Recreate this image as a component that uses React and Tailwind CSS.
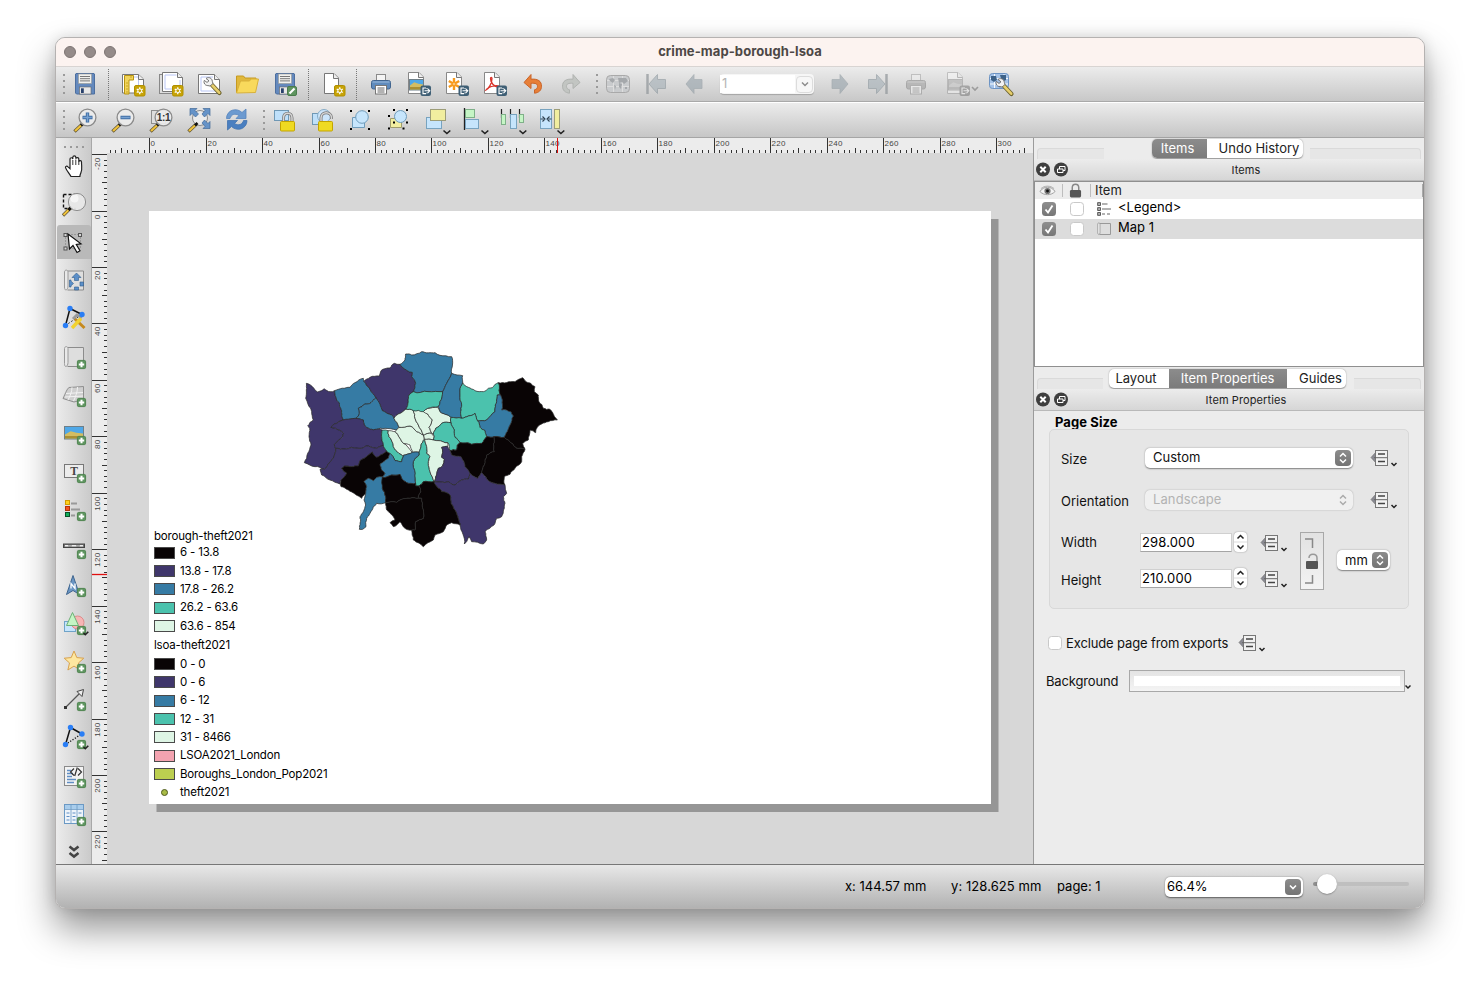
import React from "react";

/* ---------- shared icon parts ---------- */
function Ic({ children, w = "w-[28px]", vb = "0 0 28 28", faded = false }) {
  return (
    <svg viewBox={vb} className={`${w} h-[28px] shrink-0 overflow-visible ${faded ? "opacity-40 grayscale" : ""}`} fill="none">
      {children}
    </svg>
  );
}

const NewBadge = () => (
  <g>
    <rect x="15.5" y="15.5" width="10.5" height="10.5" rx="1.5" fill="#c7a306" stroke="#b08f00" />
    <path d="M20.75 17.2v7.1M17.7 19l6.1 3.5M23.8 19l-6.1 3.5" stroke="#fff" strokeWidth="1.3" />
    <circle cx="20.75" cy="20.75" r="1.9" fill="#c7a306" stroke="#fff" strokeWidth="1" />
  </g>
);

const ExportBadge = () => (
  <g>
    <rect x="15.5" y="15.5" width="10.5" height="10.5" rx="2" fill="#3f5f75" />
    <path d="M21 18h-3v5.6h3M19.5 20.8h5M22.8 18.8l2 2-2 2M22 18v1M22 22.6v1" stroke="#fff" strokeWidth="1.1" />
  </g>
);

const AddBadge = () => (
  <g>
    <rect x="17.4" y="17.4" width="8.2" height="8.2" rx="1.3" fill="#5f9560" stroke="#4f8550" />
    <path d="M21.5 18.8v5.4M18.8 21.5h5.4" stroke="#fff" strokeWidth="2" />
  </g>
);

const Caret = ({ x = 22, y = 24.5, c = "#222" }) => (
  <path d={`M${x} ${y}l3.4 3 3.4-3`} stroke={c} strokeWidth="1.6" />
);

const PageOutline = ({ children }) => (
  <g>
    <path d="M5.5 3.5h9.5l4.5 4.5v15.500h-14z" fill="#fff" stroke="#777" />
    <path d="M14.500 3.500v5h5" fill="#eee" stroke="#777" />
    {children}
  </g>
);

const Floppy = () => (
  <g>
    <path d="M5 3.500h18l.5.5v20h-18l-1-1v-19z" fill="#6489bd" stroke="#4d6f9f" />
    <rect x="7.500" y="4" width="13" height="9.500" fill="#f1f1ee" stroke="#9a9a95" strokeWidth=".6" />
    <path d="M9 6.500h10M9 8.700h10M9 10.900h10" stroke="#777" strokeWidth="1" />
    <rect x="8.500" y="17" width="11.500" height="7" fill="#e8e8e8" stroke="#666" strokeWidth=".6" />
    <rect x="10" y="18.300" width="2.800" height="4.700" fill="#28406b" />
  </g>
);

const Printer = () => (
  <g>
    <rect x="9.500" y="4.500" width="9" height="7" fill="#f4f4f4" stroke="#8a8a8a" />
    <rect x="4.500" y="10.500" width="19" height="8.500" rx="2" fill="#5f8bbd" stroke="#41658f" />
    <path d="M5.500 12h17" stroke="#9dbbdc" />
    <rect x="8.500" y="15.500" width="11" height="8.500" fill="#fff" stroke="#777" />
    <path d="M10.500 18h7M10.500 20h7M10.500 22h7" stroke="#555" strokeWidth=".9" />
  </g>
);

const Wrench = () => (
  <g>
    <path d="M17 15l7.500 8" stroke="#6d6330" strokeWidth="4.200" strokeLinecap="round" />
    <path d="M17 15l7.200 7.700" stroke="#e7cf6c" strokeWidth="2.600" strokeLinecap="round" />
    <path d="M11 8.500c2-1.600 5-1 6 1.400.5 1.200.3 2.400 1 3.600l-3 2.600c-1.200-.7-3-.2-4.300-1.100-1.700-1.100-2-3-1.400-4.600l2.700 2 2-1.600z" fill="#f2f2f2" stroke="#666" strokeWidth=".9" />
  </g>
);

const Lens = ({ children, gray = false }) => (
  <g>
    <path d="M12 17.500L3.500 25.500" stroke="#5c5030" strokeWidth="3.400" />
    <path d="M10 19.500l-6 5.500" stroke="#f0c33c" strokeWidth="2.200" />
    <path d="M12.500 17l-2.500 2.300" stroke="#111" strokeWidth="2.600" />
    <circle cx="16.500" cy="11.500" r="8.400" fill={gray ? "#e3e3e3" : "#ececec"} fillOpacity=".93" stroke="#8b8b8b" strokeWidth="1.300" />
    {children}
  </g>
);

const PictureIn = ({ x, y, w, h }) => (
  <g>
    <rect x={x} y={y} width={w} height={h} fill="#4fa8e8" stroke="#6f7f88" />
    <path d={`M${x + 0.5} ${y + h - 4.500}l${w * 0.3} -3.200 ${w * 0.3} 1.500 ${w * 0.4 - 1} 0.600v${5.200}h${-(w - 1)}z`} fill="#d3bd62" />
    <rect x={x + 0.5} y={y + h - 3} width={w - 1} height="2.500" fill="#a98f34" />
  </g>
);

const MapSheet = () => (
  <g>
    <path d="M7.500 4.500h16v19h-16" fill="#dedede" stroke="#8c8c8c" />
    <path d="M4.500 5.500c0-2.500 3.500-2.500 3.500 0v14c0 2-1 4-2 4s-1.500-1-1.500-3z" fill="#e9e9e9" stroke="#9a9a9a" />
  </g>
);

const CornerDots = () => (
  <g fill="#000">
    <rect x="4" y="3" width="2" height="2" /><rect x="22" y="3" width="2" height="2" />
    <rect x="4" y="21" width="2" height="2" /><rect x="22" y="21" width="2" height="2" />
  </g>
);

const ArrowL = ({ x = 0 }) => (
  <path d={`M${5 + x} 14l8-9.500v5h8v9h-8v5z`} fill="#97a3ab" stroke="#8a959c" strokeWidth=".8" />
);

/* ---------- toolbar furniture ---------- */
function Slot({ children }) {
  return <div className="flex h-full w-[38px] shrink-0 items-center justify-center">{children}</div>;
}
function Handle({ width }) {
  return (
    <div className={`flex h-full shrink-0 items-center justify-end pr-[1px] ${width}`}>
      <div className="flex flex-col gap-[4px]">
        {[0, 1, 2, 3].map((i) => <span key={i} className="h-[2px] w-[2px] bg-[#9a9a9a]" />)}
      </div>
    </div>
  );
}
function Sep() {
  return (
    <div className="flex h-full w-[10px] shrink-0 items-center justify-center pr-[1px]">
      <div className="h-[31px] border-l border-dotted border-[#777]" />
    </div>
  );
}

function ToolbarTop() {
  return (
    <div className="flex h-[35px] shrink-0 items-center border-b border-[#a9a9a9] bg-gradient-to-b from-[#ececec] to-[#c8c8c8]">
      <Handle width="w-[10px]" />
      <Slot><Ic><Floppy /></Ic></Slot>
      <Sep />
      <Slot><Ic>
        <path d="M3.500 4.500h16l5 4.500v14h-21z" fill="#fff" stroke="#777" /><path d="M15 7h4.500v14" stroke="#b9c6f5" />
        <path d="M19.500 4.500v5h5" fill="#eee" stroke="#777" />
        <path d="M5.500 5.500h9v4.500h-4.500v14h-4.500z" fill="#f1d45b" stroke="#b8940f" />
        <path d="M7 13h2M7 16h2M7 19h2M7 22h2M12 6v2" stroke="#b8940f" strokeWidth=".7" />
        <NewBadge />
      </Ic></Slot>
      <Slot><Ic>
        <rect x="2.500" y="4.500" width="18" height="19" fill="#ddd" stroke="#888" />
        <path d="M5.500 2.500h15l5 5v14h-20z" fill="#fff" stroke="#777" /><path d="M8 5h11.500M8 5v14h15v-9" stroke="#b9c6f5" />
        <path d="M20.500 2.500v5h5" fill="#eee" stroke="#777" />
        <NewBadge />
      </Ic></Slot>
      <Slot><Ic>
        <path d="M3.500 4.500h16l5 5v14h-21z" fill="#fff" stroke="#777" /><path d="M6 7h12M6 7v14h15" stroke="#b9c6f5" />
        <path d="M19.500 4.500v5h5" fill="#eee" stroke="#777" />
        <Wrench />
      </Ic></Slot>
      <Slot><Ic>
        <path d="M3.500 22.500v-16.500h7l1.500 2h11v4" fill="#e0b83c" stroke="#c69a20" />
        <path d="M3.500 23l4-12h9l1.500-2h7.500l-3 13.500z" fill="#f8d95c" stroke="#d8b13a" />
      </Ic></Slot>
      <Slot><Ic>
        <Floppy />
        <rect x="16.500" y="16.500" width="9" height="9" rx="1.500" fill="#5f9560" stroke="#4a7c4c" />
        <path d="M18.500 23.500l5-5" stroke="#fff" strokeWidth="2.200" />
      </Ic></Slot>
      <Sep />
      <Slot><Ic><PageOutline><NewBadge /></PageOutline></Ic></Slot>
      <Sep />
      <Slot><Ic><Printer /></Ic></Slot>
      <Slot><Ic><path d="M3.500 2.500h10.500l4.500 4.500v16.500h-15z" fill="#fff" stroke="#888" /><path d="M13.500 2.500v5h5" fill="#eee" stroke="#777" /><PictureIn x={4.500} y={9.500} w={14} h={10.500} /><ExportBadge /></Ic></Slot>
      <Slot><Ic>
        <path d="M3.500 2.500h10.500l4.500 4.500v16.500h-15z" fill="#fff" stroke="#888" /><path d="M13.500 2.500v5h5" fill="#eee" stroke="#777" />
        <path d="M11 8v12M5.800 11l10.400 6M16.200 11l-10.400 6" stroke="#f79a1c" strokeWidth="2.400" />
        <circle cx="11" cy="14" r="1.300" fill="#fff" stroke="#f79a1c" />
        <ExportBadge />
      </Ic></Slot>
      <Slot><Ic>
        <path d="M3.500 2.500h10.500l4.500 4.500v16.500h-15z" fill="#fff" stroke="#888" /><path d="M13.500 2.500v5h5" fill="#eee" stroke="#777" />
        <path d="M5 20c3-1.500 6-7 6-11.500 0-1.500-1.500-1.500-1.500 0 0 4 3.500 8.500 8 8.500 1.500-.6-1-1.800-4-1.200-3.500.5-7 1.500-8.500 4.200z" stroke="#d9342b" strokeWidth="1.300" />
        <ExportBadge />
      </Ic></Slot>
      <Slot><Ic>
        <path d="M5 12.500l7-8v4.700c7-.6 10.500 2 10.500 7 0 4-2.500 6.500-7 7v-3.400c2-.4 3-1.700 3-3.500 0-2.500-2-3.300-6.500-3v5.200z" fill="#e77f38" stroke="#c9652a" />
      </Ic></Slot>
      <Slot><Ic>
        <path d="M23 12.500l-7-8v4.700c-7-.6-10.500 2-10.500 7 0 4 2.500 6.500 7 7v-3.400c-2-.4-3-1.700-3-3.500 0-2.500 2-3.300 6.500-3v5.200z" fill="#c2c5c2" stroke="#b0b3b0" />
      </Ic></Slot>
      <Handle width="w-[9px]" />
      <Slot><Ic>
        <rect x="2.500" y="5.500" width="23" height="17" rx="4" fill="#c9cbcd" stroke="#a9a9a9" />
        <path d="M9.500 6v16M18.500 6v16M3 10.500h22M3 16.500h22" stroke="#dedede" />
        <path d="M5 9l4-1 2 2-2 3-3-2zM10 15l2 1-1 4zM14 8l8 0 2 3-4 3-2-2-3 1zM15 13l3 1-1 5-2-2zM21 17h2v2h-2z" fill="#a5a8ab" />
      </Ic></Slot>
      <Slot><Ic><path d="M5.500 4v20" stroke="#8f9499" strokeWidth="2.500" opacity=".7" /><g opacity=".62"><path d="M7 14l8.500-9.500v5h8v9h-8v5z" fill="#a5b0b7" stroke="#8a959c" /></g></Ic></Slot>
      <Slot><Ic><g opacity=".62"><ArrowL x={1} /></g></Ic></Slot>
      <div className="ml-[7px] mr-[7px] flex h-[20px] w-[94px] items-center justify-between rounded-[4px] bg-[#f6f6f6] shadow-[0_1px_1px_rgba(0,0,0,0.2)]">
        <span className="flex h-[18px] w-[75px] items-center bg-white pl-[2px] text-[13px] text-[#b5b5b5]">1</span>
        <span className="mr-[1px] flex h-[17px] w-[17px] items-center justify-center rounded-[4px] border border-[#dcdcdc] bg-[#f7f7f7]">
          <svg viewBox="0 0 10 10" className="h-[10px] w-[10px]" fill="none"><path d="M2 3.500l3 3 3-3" stroke="#8c8c8c" strokeWidth="1.500" /></svg>
        </span>
      </div>
      <Slot><Ic><g opacity=".62" transform="matrix(-1 0 0 1 27 0)"><ArrowL /></g></Ic></Slot>
      <Slot><Ic><path d="M22.500 4v20" stroke="#8f9499" strokeWidth="2.500" opacity=".7" /><g opacity=".62"><path d="M21 14l-8.500-9.500v5h-8v9h8v5z" fill="#a5b0b7" stroke="#8a959c" /></g></Ic></Slot>
      <Slot><Ic faded><Printer /></Ic></Slot>
      <div className="flex w-[47px] shrink-0 justify-center pl-[7px]">
        <Ic w="w-[34px]" vb="3 0 34 28">
          <g className="opacity-40 grayscale"><path d="M5.500 2.500h10.500l4.500 4.500v16.500h-15z" fill="#fff" stroke="#888" /><path d="M15.500 2.500v5h5" fill="#eee" stroke="#777" /><PictureIn x={6.500} y={9.500} w={14} h={10.500} /><g transform="translate(2 0)"><ExportBadge /></g></g>
          <path d="M30 17l3 3 3-3" stroke="#9c9c9c" strokeWidth="1.600" />
        </Ic>
      </div>
      <Slot><Ic>
        <rect x="2.500" y="3.500" width="19" height="15" rx="3" fill="#a5c3e8" stroke="#6d94c4" />
        <path d="M7.500 4v14M17 4v14M3 8.500h18M3 14h18" stroke="#fff" strokeWidth=".9" />
        <path d="M4 6h5l1 4-3 2-3-2zM13 5h6v5l-4 2zM11 13l3 1-1 4z" fill="#3d6288" />
        <g transform="translate(0 1)"><Wrench /></g>
      </Ic></Slot>
    </div>
  );
}

function Shackle({ open }) {
  const d = open ? "M12 15v-3c0-7 10.500-7 10.500 0v1" : "M12.500 16v-4c0-6.500 8.500-6.500 8.500 0v4";
  return (
    <g>
      <path d={d} stroke="#777" strokeWidth="3" />
      <path d={d} stroke="#d6d6d6" strokeWidth="1.500" />
      <rect x="9.500" y="15.500" width="14" height="9.500" rx="1" fill="#efda22" stroke="#c3a400" />
    </g>
  );
}

function ToolbarSecond() {
  return (
    <div className="flex h-[36px] shrink-0 items-center border-b border-t border-b-[#a5a5a5] border-t-white bg-gradient-to-b from-[#ececec] to-[#c6c6c6]">
      <Handle width="w-[10px]" />
      <Slot><Ic><Lens><path d="M16.500 6.500v10M11.500 11.500h10" stroke="#3f6da3" strokeWidth="3.400" /><path d="M16.500 7.200v8.600M12.200 11.500h8.600" stroke="#77a2d2" strokeWidth="1.400" /></Lens></Ic></Slot>
      <Slot><Ic><Lens><path d="M11.500 11.500h10" stroke="#3f6da3" strokeWidth="3.400" /><path d="M12.200 11.500h8.600" stroke="#77a2d2" strokeWidth="1.400" /></Lens></Ic></Slot>
      <Slot><Ic>
        <rect x="4.500" y="4.500" width="14" height="13" fill="#dedede" stroke="#8d8d8d" />
        <Lens><text x="16.500" y="15" textAnchor="middle" fontSize="10" fontWeight="700" fill="#333" letterSpacing="-0.4" fontFamily="Liberation Sans, sans-serif">1:1</text></Lens>
      </Ic></Slot>
      <Slot><Ic>
        <path d="M12 17.500L3.500 25.500" stroke="#5c5030" strokeWidth="3.400" /><path d="M10 19.500l-6 5.500" stroke="#f0c33c" strokeWidth="2.200" />
        <circle cx="15" cy="12" r="7.500" fill="#ececec" stroke="#8b8b8b" />
        <g fill="#6593c8" stroke="#436a98" strokeWidth=".7">
          <path d="M5 2.500h7l-2 2 3.500 3.500-3 3L7 7.500l-2 2z" /><path d="M25 2.500h-7l2 2-3 3.500 2.500 3L23 7.500l2 2z" /><path d="M25 22.500h-7l2-2-3-3.500 2.500-3L23 17.500l2-2z" />
        </g>
        <path d="M12.500 17l-2.500 2.300" stroke="#111" strokeWidth="2.600" />
      </Ic></Slot>
      <Slot><Ic>
        <path d="M3.500 12.500c0-8.500 10-11.500 15.500-6l4-3.500v9.500h-10l3-3c-4-2.500-8-1-9 3z" fill="#6c9ad0" stroke="#5584bd" strokeWidth=".8" />
        <path d="M24 14.500c0 8.500-10 11.500-15.500 6l-4 3.500v-9.500h10l-3 3c4 2.500 8 1 9-3z" fill="#4a7fc0" stroke="#4173b0" strokeWidth=".8" />
      </Ic></Slot>
      <Handle width="w-[10px]" />
      <Slot><Ic><rect x="3.500" y="4.500" width="14" height="10" fill="#bfe0fa" stroke="#6f98b5" /><Shackle /></Ic></Slot>
      <Slot><Ic><rect x="3.500" y="7.500" width="12" height="11" fill="#bfe0fa" stroke="#6f98b5" /><circle cx="15" cy="10" r="6.500" fill="#cde6fb" stroke="#86abc6" /><Shackle open /></Ic></Slot>
      <Slot><Ic><g transform="translate(-1 1)"><CornerDots /><path d="M6.500 10.500h12v10h-12z" fill="#c6e5fc" stroke="#6f9cbb" /><circle cx="16" cy="10" r="6.300" fill="#c6e5fc" stroke="#6f9cbb" /></g></Ic></Slot>
      <Slot><Ic>
        <g transform="translate(-1 0)">
          <path d="M6.500 12.500h11v9h-11z" fill="#f2eea0" stroke="#9f9c6c" /><circle cx="16.500" cy="10.500" r="6" fill="#c6e5fc" stroke="#6f9cbb" />
          <g fill="#000"><rect x="9" y="3" width="2" height="2" /><rect x="22" y="3" width="2" height="2" /><rect x="4" y="9" width="2" height="2" /><rect x="22" y="15.500" width="2" height="2" /><rect x="9" y="15.500" width="2" height="2" /><rect x="4" y="21.500" width="2" height="2" /><rect x="18.500" y="21.500" width="2" height="2" /></g>
        </g>
      </Ic></Slot>
      <Slot><Ic><rect x="3.500" y="11.500" width="15" height="11" fill="#c6e5fc" stroke="#78a3bf" /><rect x="7.500" y="3.500" width="15" height="11" fill="#f1ee9f" stroke="#9d9d78" /><Caret x={20.500} /></Ic></Slot>
      <Slot><Ic><path d="M3.500 2v22" stroke="#222" strokeWidth="1.300" /><rect x="4.500" y="3.500" width="9" height="8" fill="#c5f5c5" stroke="#7fb089" /><rect x="4.500" y="13.500" width="13" height="9" fill="#c6e5fc" stroke="#78a3bf" /><Caret x={20.500} /></Ic></Slot>
      <Slot><Ic><path d="M2.500 3v9M11.500 3v9M20.500 3v9" stroke="#222" strokeWidth="1.200" /><rect x="2.500" y="8.500" width="4" height="10" fill="#c5f5c5" stroke="#7fb089" /><rect x="11.500" y="8.500" width="6" height="14" fill="#c6e5fc" stroke="#78a3bf" /><rect x="20.500" y="8.500" width="4" height="8" fill="#c5f5c5" stroke="#7fb089" /><Caret x={20.500} /></Ic></Slot>
      <Slot><Ic><rect x="3.500" y="3.500" width="11" height="19" fill="#c6e5fc" stroke="#78a3bf" /><rect x="17.500" y="3.500" width="5" height="19" fill="#f1ee9f" stroke="#9d9d78" /><path d="M3.500 13h3M5.500 10.500l2.500 2.500-2.500 2.500M14.500 13h-3M12.500 10.500l-2.500 2.500 2.500 2.500" stroke="#2e4150" strokeWidth="1.100" /><Caret x={20.500} /></Ic></Slot>
    </div>
  );
}

/* ---------- left toolbox ---------- */
const sideTools = [
  <Ic key="pan"><g transform="translate(1 1)"><path d="M10 25c-1.500-3-4.500-6.500-5.500-9.500-.3-1.500 1.500-2 2.500-.8l2 2V6.500c0-2 2.600-2 2.800 0V4.500c.2-2 3-2 3 0V6c.3-1.600 3-1.500 3 .3V9c.4-1.300 2.700-1.300 2.700.5 0 5 1 8-.6 11.500-.6 1.500-1 2.500-1 4z" transform="scale(1 .94)" fill="#fff" stroke="#222" strokeWidth="1.200" /><path d="M11.800 7v5M14.800 6.500v5.500M17.800 8v4" stroke="#222" strokeWidth=".9" /></g></Ic>,
  <Ic key="zoom"><path d="M3.500 4.500h12M3.500 4.500v14h12" stroke="#111" strokeWidth="1.400" strokeDasharray="3 2" /><g transform="translate(.5 .5)"><path d="M10 17.500L2.500 25" stroke="#5c5030" strokeWidth="3.200" /><path d="M8 19.500l-5 5" stroke="#f0c33c" strokeWidth="2" /><path d="M11 16.500l-3 3" stroke="#111" strokeWidth="2.500" /><circle cx="16.500" cy="11.500" r="8.600" fill="#e8e8e8" fillOpacity=".92" stroke="#8e8e8e" /><circle cx="14" cy="8" r="4" fill="#fff" opacity=".6" /></g></Ic>,
  <Ic key="select"><g transform="translate(0 1)"><rect x="5.500" y="5.500" width="15" height="14" stroke="#777" strokeDasharray="1 2" /><g fill="#d4d4d4" stroke="#555"><rect x="4" y="4.500" width="3" height="3" /><rect x="18.500" y="4.500" width="3" height="3" /><rect x="4" y="18" width="3" height="3" /></g><path d="M8 5l1.500 15 3.500-3.500 4 7 3-1.700-3.700-6.300 4.700-.7z" fill="#fff" stroke="#111" strokeWidth="1.200" /></g></Ic>,
  <Ic key="move"><g transform="translate(0 .5)"><MapSheet /><g fill="#5b8fc9" stroke="#2f5d8c" strokeWidth=".6"><path d="M16.500 6.500l4.500 4.500h-2.500v3h-4v-3H12z" /><path d="M9.500 13.500h1.500v1.200l2.500 2.300-2.500 2.300v1.200h-1.500zM20 15.500h3.500v4h-3.500zM14.500 20.500h4v3h-4z" /></g></g></Ic>,
  <Ic key="nodes"><path d="M10 4.500l12 6M10 4.500L5.500 21.500" stroke="#111" strokeWidth="1.500" /><path d="M5.500 21.500l16-11" stroke="#111" strokeDasharray="1.500 2" /><path d="M13 15l4-4 5 2.500" stroke="#999" strokeWidth="3" /><path d="M15 15l9.500 9" stroke="#c68a1f" strokeWidth="3" /><path d="M21 14.500l-9 9.500" stroke="#f1d22f" strokeWidth="3.400" /><g fill="#2a7ef5"><circle cx="10" cy="4.500" r="2.700" /><circle cx="22" cy="10.500" r="2.700" /><circle cx="5.500" cy="21.500" r="2.700" /></g></Ic>,
  <Ic key="map"><MapSheet /><AddBadge /></Ic>,
  <Ic key="map3d"><g transform="translate(0 1)"><path d="M3 16.500C6 10 7 7 9 5.500l14.500-1v13L14 20z" fill="#cfcfcf" stroke="#8f8f8f" /><path d="M6 11.500l17-1M12 5.200C12 10 10 14 8 18M17.500 5c0 5-2 10-4 14M5 15l18-1" stroke="#f3f3f3" /></g><AddBadge /></Ic>,
  <Ic key="picture"><PictureIn x={4.500} y={7.500} w={19} h={12.500} /><AddBadge /></Ic>,
  <Ic key="label"><rect x="4.500" y="7.500" width="19" height="13" fill="#ececec" stroke="#777" /><text x="14" y="18" textAnchor="middle" fontSize="11.500" fontWeight="700" fill="#444" fontFamily="Liberation Serif, serif">T</text><AddBadge /></Ic>,
  <Ic key="legend"><rect x="5.500" y="5.500" width="4" height="4" fill="#ffd21c" stroke="#d39b00" /><rect x="5.500" y="11.500" width="4" height="4" fill="#f4511e" stroke="#b2320b" /><rect x="5.500" y="17.500" width="4" height="4" fill="#0fae58" stroke="#064f28" /><path d="M11 8.500h6M11 14.500h9M11 20.500h4" stroke="#999" strokeWidth="1.800" /><AddBadge /></Ic>,
  <Ic key="scale"><rect x="3.500" y="11" width="21" height="3.500" fill="#777" stroke="#444" /><path d="M5 12.700h3.500M11.500 12.700h5M19.500 12.700h3.500" stroke="#eee" strokeWidth="1.500" /><path d="M8.500 12.700h3M16.500 12.700h3" stroke="#aaa" strokeWidth="1.500" /><AddBadge /></Ic>,
  <Ic key="north"><g transform="translate(-1 .5)"><path d="M14 4l6.500 19-6.500-4-6.500 4z" fill="#6b96c4" stroke="#3e648e" /><path d="M12 17v-5l4 5v-5" stroke="#fff" strokeWidth="1.300" /></g><AddBadge /></Ic>,
  <Ic key="shape"><rect x="4.500" y="12.500" width="11" height="10" fill="#c6e5fc" stroke="#6fa3c8" /><circle cx="17.500" cy="13.500" r="6.500" fill="#f7b5b5" stroke="#de8c8c" /><path d="M12.500 3.500l6 13H6.500z" fill="#c5f5c5" stroke="#6db077" /><AddBadge /><path d="M23.500 24l1.800 1.700 3-3" stroke="#222" strokeWidth="1.600" /></Ic>,
  <Ic key="marker"><path d="M14 4l2.800 6.600 7 .6-5.300 4.700 1.600 7-6.100-3.800L7.900 23l1.600-7.100-5.300-4.700 7-.6z" fill="#fde7a0" stroke="#d8a24f" /><AddBadge /></Ic>,
  <Ic key="arrow"><path d="M6 22L20 8" stroke="#555" strokeWidth="1.300" /><path d="M23.500 4.500l-1.500 7-5-5z" fill="#eee" stroke="#444" /><rect x="4" y="21" width="3" height="3" fill="#333" /><AddBadge /></Ic>,
  <Ic key="node"><path d="M10.500 4.500l11.500 6.500M10.500 4.500L5.500 21.500" stroke="#111" strokeWidth="1.500" /><path d="M5.500 21.500l16-10.500" stroke="#111" strokeWidth="1.300" strokeDasharray="1.200 1.600" /><g fill="#2a7ef5"><circle cx="10.500" cy="4.500" r="2.700" /><circle cx="22" cy="11" r="2.700" /><circle cx="5.500" cy="21.500" r="2.700" /></g><AddBadge /><path d="M23.500 24l1.800 1.700 3-3" stroke="#222" strokeWidth="1.600" /></Ic>,
  <Ic key="html"><rect x="4.500" y="4.500" width="19" height="19" fill="#f3f3f3" stroke="#8a8a8a" /><path d="M7 8.500h4M7 11.500h6M7 14.500h5M7 17.500h9M7 20.500h7" stroke="#5f8ec5" strokeWidth="1.600" /><path d="M14 6.500L10.500 10l3.500 3.500M18 6.500l3.500 3.500-3.500 3.500M17.300 5.500l-2.600 8.500" stroke="#333" strokeWidth="1.200" /><AddBadge /></Ic>,
  <Ic key="table"><rect x="4.500" y="4.500" width="19" height="19" fill="#eef4fa" stroke="#6b99c4" /><rect x="5" y="5" width="18" height="4" fill="#a9cdec" /><path d="M5 9.500h18M11 5v18M17 5v18" stroke="#6b99c4" strokeWidth=".8" /><path d="M6.500 13h3M6.500 16.500h3M6.500 20h3M12.500 13h3M12.500 16.500h3M12.500 20h3M18.500 13h3" stroke="#5f8ec5" strokeWidth="1.200" /><AddBadge /></Ic>,
];

function SideToolbar() {
  return (
    <div className="flex w-[36px] shrink-0 flex-col border-r border-[#a8a8a8] bg-gradient-to-r from-[#ececec] to-[#cacaca] pl-[1px]">
      <div className="flex h-[9px] shrink-0 items-end justify-center gap-[4px]">
        {[0, 1, 2, 3].map((i) => <span key={i} className="mb-[-1px] h-[2px] w-[2px] bg-[#9a9a9a]" />)}
      </div>
      {sideTools.map((t, i) => (
        <div key={i} className="flex h-[38.100px] shrink-0 items-center justify-center">
          <div className={`flex h-[34px] w-full items-center justify-center rounded-t-[3px] ${i === 2 ? "bg-[#b9b9b9]" : ""}`}>{t}</div>
        </div>
      ))}
      <div className="flex flex-1 items-center justify-center pt-[8px]">
        <svg viewBox="0 0 12 14" className="h-[14px] w-[12px] shrink-0" fill="none"><path d="M1.500 1.500l4.500 3.500 4.500-3.500M1.500 8l4.500 3.500 4.500-3.500" stroke="#444" strokeWidth="2.600" /></svg>
      </div>
    </div>
  );
}

/* ---------- rulers ---------- */
const MM = 2.8225;
function TopRuler() {
  const ticks = [];
  for (let mm = -14; mm <= 310; mm += 2) {
    const x = Math.round(57.2 + mm * MM) + 0.5;
    const major = mm % 20 === 0, mid = mm % 10 === 0;
    ticks.push(<path key={mm} d={`M${x} ${major ? 0 : mid ? 10 : 12}V15`} stroke="#333" />);
    if (major) ticks.push(<text key={`t${mm}`} x={x + 1} y="8" fontSize="8" letterSpacing="0.3" fill="#444" fontFamily="Liberation Sans, sans-serif">{mm}</text>);
  }
  return (
    <svg className="h-[15px] w-[941px] shrink-0" viewBox="0 0 941 15">
      <rect width="941" height="15" fill="#ececec" />
      {ticks}
      <path d="M465.500 0V15" stroke="#e01010" />
    </svg>
  );
}
function LeftRuler() {
  const ticks = [];
  for (let mm = -20; mm <= 230; mm += 2) {
    const y = Math.round(57.500 + mm * MM) + 0.5;
    const major = mm % 20 === 0, mid = mm % 10 === 0;
    ticks.push(<path key={mm} d={`M${major ? 0 : mid ? 10 : 12} ${y}H15`} stroke="#333" />);
    if (major) ticks.push(<text key={`t${mm}`} transform={`translate(8 ${y + 3}) rotate(-90)`} textAnchor="end" fontSize="8" letterSpacing="0.3" fill="#444" fontFamily="Liberation Sans, sans-serif">{mm}</text>);
  }
  return (
    <svg className="h-[710px] w-[15px] shrink-0" viewBox="0 0 15 710">
      <rect width="15" height="710" fill="#ececec" />
      {ticks}
      <path d="M0 421.500H15" stroke="#e01010" strokeWidth="1.300" />
    </svg>
  );
}

/* ---------- choropleth ---------- */
const K = "#090405", P = "#3f366b", B = "#367ba4", T = "#4bc2ad", L = "#def5e5";
const boroughs = [
  [P, "34,130 45,134 68,156 88,146 105,155 119,152 125,180 133,188 140,228 145,240 118,252 108,262 133,270 146,280 143,290 118,313 122,325 112,358 88,388 60,380 44,375 28,368 38,340 48,315 42,290 44,265 38,258 55,240 50,215 40,195 32,175 34,150"],
  [B, "119,152 165,142 180,128 205,115 207,124 243,173 228,188 210,192 190,205 193,220 183,235 160,238 145,240 140,228 133,188 125,180"],
  [P, "207,124 225,112 253,108 258,92 270,86 285,84 298,70 315,73 322,82 352,97 350,110 362,130 355,155 342,165 340,185 333,207 310,222 297,235 290,225 262,212 255,193 243,173"],
  [B, "315,73 330,60 332,42 350,45 380,35 420,38 435,46 470,50 470,100 455,130 443,155 355,155 362,130 350,110 352,97 322,82"],
  [B, "243,173 255,193 262,212 290,225 297,235 312,262 305,270 270,265 245,268 225,268 208,255 205,240 183,235 193,220 190,205 210,192 228,188"],
  [P, "145,240 160,238 183,235 205,240 208,255 225,268 245,268 262,270 260,290 265,315 245,325 220,318 200,325 170,322 150,327 122,325 118,313 143,290 146,280 133,270 108,262 118,252"],
  [P, "122,325 150,327 170,322 200,325 220,318 245,325 265,315 275,333 262,343 245,352 232,336 220,345 195,362 190,378 170,380 148,378 140,385 155,400 138,420 135,432 105,420 80,405 75,388 88,388 112,358"],
  [K, "232,336 245,352 262,343 275,333 285,340 280,355 270,362 255,372 260,390 270,400 262,410 245,412 235,422 220,415 207,425 215,440 212,460 200,475 180,462 160,450 138,440 138,420 155,400 140,385 148,378 170,380 190,378 195,362 220,345"],
  [B, "207,425 220,415 235,422 245,412 262,410 265,430 262,445 272,470 272,488 245,490 235,500 225,520 215,535 213,560 203,568 193,568 195,530 205,515 212,495 207,480 212,460 215,440"],
  [T, "262,270 280,272 282,290 295,320 312,340 325,350 320,365 300,362 285,340 275,333 265,315 260,290"],
  [L, "280,272 300,275 315,295 325,310 340,322 352,337 325,346 325,350 312,340 295,320 282,290"],
  [L, "300,275 312,262 345,258 365,275 385,285 388,298 378,315 372,337 352,337 345,315 325,310 315,295"],
  [L, "297,235 310,222 333,207 355,212 360,235 370,255 385,285 365,275 345,258 312,262"],
  [L, "355,212 385,205 398,222 412,240 402,262 410,280 388,285 385,285 370,255 360,235"],
  [L, "385,215 398,205 428,202 435,215 468,232 468,248 440,250 422,265 415,282 410,280 402,262 412,240 398,222"],
  [L, "385,285 388,285 410,280 418,290 415,300 388,298"],
  [T, "355,155 443,155 435,185 430,200 398,205 385,215 355,212 333,207 340,185 342,165"],
  [B, "470,100 503,107 503,128 497,140 495,165 500,195 497,215 500,235 468,232 435,215 430,200 435,185 443,155 455,130"],
  [T, "503,128 520,142 540,152 565,155 580,145 592,143 610,128 617,165 607,165 605,185 600,205 600,215 575,240 548,243 540,220 500,235 497,215 500,195 495,165 497,140"],
  [K, "610,128 660,125 683,113 690,122 720,140 718,155 730,165 732,185 745,205 765,208 787,240 760,245 740,252 727,262 722,278 705,270 700,300 683,310 690,328 665,325 640,300 628,292 645,255 655,228 648,215 620,210 622,180 617,165"],
  [B, "607,165 617,165 622,180 620,210 648,215 655,228 645,255 628,292 597,290 575,290 570,272 555,262 548,243 575,240 600,215 600,205 605,185"],
  [T, "468,232 500,235 540,220 548,243 555,262 570,272 575,290 560,310 530,313 495,308 480,292 478,270 468,248"],
  [T, "415,282 422,265 440,250 468,248 478,270 480,292 495,308 487,315 485,330 465,332 458,308 450,308 432,302 415,300 418,290"],
  [T, "378,315 388,298 395,320 395,340 405,350 400,370 405,395 417,425 400,425 385,425 372,438 362,438 360,400 355,365 372,345 372,337"],
  [L, "388,298 415,300 432,302 450,308 458,308 458,320 440,322 443,338 440,352 448,358 443,378 430,385 425,405 417,425 405,395 400,370 405,350 395,340 395,320"],
  [B, "325,350 325,346 352,337 372,337 372,345 355,365 360,400 362,430 335,428 320,415 315,403 290,405 262,412 270,400 260,390 255,372 270,362 280,355 285,340 300,362 320,365"],
  [K, "465,332 485,330 487,315 495,308 530,313 560,310 575,290 597,290 598,335 575,345 568,375 560,398 548,415 525,400 510,380 498,350 470,345"],
  [K, "597,290 628,292 640,300 665,325 690,328 680,350 680,365 660,385 645,403 628,410 630,435 600,430 585,425 560,398 568,375 575,345 598,335"],
  [P, "458,320 465,332 470,345 498,350 510,380 525,400 520,417 500,420 480,435 460,425 417,425 425,405 430,385 443,378 448,358 440,352 443,338 440,322"],
  [P, "417,425 460,425 480,435 500,420 520,417 525,400 548,415 560,398 585,425 600,430 630,435 635,460 625,470 630,490 620,530 605,535 600,550 570,575 575,600 565,612 530,605 522,590 512,608 508,612 495,555 485,520 468,490 465,465 440,455"],
  [K, "372,438 385,425 400,425 417,425 440,455 465,465 468,490 485,520 495,555 470,548 455,555 445,575 420,585 415,600 385,620 355,600 350,570 360,570 362,545 385,535 380,475 370,475 377,455"],
  [K, "262,412 290,405 315,403 320,415 335,428 362,430 362,438 372,438 377,455 370,475 320,478 305,487 272,488 272,470 262,445"],
  [K, "272,488 305,487 320,478 370,475 380,475 385,535 362,545 360,570 350,570 330,565 315,545 295,560 285,548 300,540 285,520 275,510"],
];

/* Splits every edge with a small deterministic offset; both sides of a shared edge get the same points. */
function roughEdge(a, b, depth) {
  const len = Math.hypot(b[0] - a[0], b[1] - a[1]);
  if (depth === 0 || len < 9) return [a];
  const flip = a[0] > b[0] || (a[0] === b[0] && a[1] > b[1]);
  const [p, q] = flip ? [b, a] : [a, b];
  const s = Math.sin(p[0] * 12.9898 + p[1] * 78.233 + q[0] * 37.719 + q[1] * 4.581) * 43758.5453;
  const r = (s - Math.floor(s) - 0.5) * Math.min(5, len * 0.22);
  const m = [(p[0] + q[0]) / 2 - ((q[1] - p[1]) / len) * r, (p[1] + q[1]) / 2 + ((q[0] - p[0]) / len) * r];
  return [...roughEdge(a, m, depth - 1), ...roughEdge(m, b, depth - 1)];
}
function roughPath(str) {
  const pts = str.split(" ").map((s) => s.split(",").map(Number));
  return "M" + pts.flatMap((p, i) => roughEdge(p, pts[(i + 1) % pts.length], 3)).map((p) => `${p[0].toFixed(1)} ${p[1].toFixed(1)}`).join("L") + "Z";
}

function LondonMap() {
  return (
    <svg className="absolute left-[146px] top-[129px] h-[215px] w-[270px]" viewBox="0 0 810 645">
      {boroughs.map(([fill, pts], i) => <path key={i} d={roughPath(pts)} fill={fill} stroke="#2b2b2b" strokeWidth="2.200" strokeLinejoin="round" />)}
    </svg>
  );
}

const legend = [
  [null, "borough-theft2021"], ["bg-[#090405]", "6 - 13.8"], ["bg-[#3f366b]", "13.8 - 17.8"], ["bg-[#367ba4]", "17.8 - 26.2"], ["bg-[#4bc2ad]", "26.2 - 63.6"], ["bg-[#def5e5]", "63.6 - 854"],
  [null, "lsoa-theft2021"], ["bg-[#090405]", "0 - 0"], ["bg-[#3f366b]", "0 - 6"], ["bg-[#367ba4]", "6 - 12"], ["bg-[#4bc2ad]", "12 - 31"], ["bg-[#def5e5]", "31 - 8466"],
  ["bg-[#f3a3b0]", "LSOA2021_London"], ["bg-[#bccf50]", "Boroughs_London_Pop2021"], ["dot", "theft2021"],
];

function Legend() {
  return (
    <div className="absolute left-[5px] top-[316px] flex flex-col text-[11.500px] leading-none tracking-[-0.180px] text-black">
      {legend.map(([c, t], i) => (
        <div key={i} className={`flex items-center whitespace-nowrap ${c ? "h-[18.350px]" : i ? "h-[19.600px] pt-[2px]" : "h-[16.500px] pt-[2px]"}`}>
          {c === "dot" && <span className="mr-[5px] flex w-[21px] justify-center"><span className="h-[7px] w-[7px] rounded-full border border-[#4f5a1e] bg-[#a8bb45]" /></span>}
          {c && c !== "dot" && <span className={`mr-[5px] h-[12px] w-[21px] border border-[#4a4a4a] ${c}`} />}
          <span className={c ? "pt-[1px]" : ""}>{t}</span>
        </div>
      ))}
    </div>
  );
}

/* ---------- right dock ---------- */
function TabStrip({ tabs, left, right }) {
  return (
    <div className="flex h-[21px] shrink-0 items-end px-[3px]">
      <div className={`h-[11px] rounded-tl-[4px] border-l border-t border-[#dadada] bg-[#e6e6e6] ${left}`} />
      <div className="mb-[1px] flex h-[19px] overflow-hidden rounded-[5px] bg-white text-[13px] shadow-[0_0.5px_1.5px_rgba(0,0,0,0.4)]">
        {tabs.map(([t, cls, on]) => (
          <span key={t} className={`flex items-center justify-center whitespace-nowrap pt-[1px] ${cls} ${on ? "bg-gradient-to-b from-[#8c8c8c] to-[#7b7b7b] text-white" : "text-[#222]"}`}>{t}</span>
        ))}
      </div>
      <div className={`h-[11px] rounded-tr-[4px] border-r border-t border-[#dadada] bg-[#e6e6e6] ${right}`} />
    </div>
  );
}

function DockHeader({ title, pad }) {
  return (
    <div className="flex h-[22px] shrink-0 items-center border-b border-[#b9b9b9] bg-gradient-to-b from-[#ececec] to-[#d6d6d6] pl-[2px]">
      <svg viewBox="0 0 34 16" className="h-[16px] w-[34px] shrink-0" fill="none">
        <circle cx="7" cy="7.500" r="7" fill="#3e3e3e" /><path d="M4.300 4.800l5.400 5.400M9.700 4.800l-5.400 5.400" stroke="#fff" strokeWidth="2" />
        <circle cx="25" cy="7.500" r="7" fill="#3e3e3e" /><path d="M23.500 7v-2.500h5.500v4h-2M21.500 7h5.500v3.500h-5.500z" stroke="#fff" />
      </svg>
      <span className={`flex-1 pt-[2px] text-center text-[11px] tracking-[0.100px] text-[#222] ${pad}`}>{title}</span>
    </div>
  );
}

function Check({ on }) {
  return on ? (
    <span className="flex h-[14px] w-[14px] shrink-0 items-center justify-center rounded-[3.500px] bg-gradient-to-b from-[#8f8f8f] to-[#767676]">
      <svg viewBox="0 0 14 14" className="h-[14px] w-[14px]" fill="none"><path d="M3.500 7.500l2.500 3 4.500-7" stroke="#fff" strokeWidth="1.900" /></svg>
    </span>
  ) : (
    <span className="h-[14px] w-[14px] shrink-0 rounded-[3.500px] border border-[#c9c9c9] bg-white" />
  );
}

function ItemRow({ on, icon, text, bg }) {
  return (
    <div className={`flex h-[20px] items-center pl-[7px] ${bg}`}>
      <Check on={on} />
      <span className="w-[14px]" />
      <Check />
      <span className="flex w-[34px] justify-center pl-[5px]">{icon}</span>
      <span className="-mt-[2px] text-[13px] text-black">{text}</span>
    </div>
  );
}

const Override = () => (
  <svg viewBox="0 0 28 18" className="h-[18px] w-[28px] shrink-0" fill="none">
    <path d="M1 8.500l5-5.500v11z" fill="#8a8a92" stroke="#6a6a6a" strokeWidth=".6" />
    <rect x="5.500" y="1.500" width="12" height="15" fill="#f2f2f2" stroke="#777" />
    <path d="M8 5h7M8 12.500h7" stroke="#444" strokeWidth="1.500" /><path d="M4 8.700h13" stroke="#666" />
    <path d="M21.500 14l2.500 2.500 2.500-2.500" stroke="#222" strokeWidth="1.500" />
  </svg>
);

function UpDown({ dim }) {
  return (
    <span className={`flex h-[16px] w-[16px] items-center justify-center rounded-[4px] ${dim ? "" : "bg-gradient-to-b from-[#8c8c8c] to-[#747474]"}`}>
      <svg viewBox="0 0 10 14" className="h-[14px] w-[10px]" fill="none"><path d="M2 5.500l3-3 3 3M2 8.500l3 3 3-3" stroke={dim ? "#ababab" : "#fff"} strokeWidth="1.500" /></svg>
    </span>
  );
}

function Select({ text, dim }) {
  return (
    <div className={`flex h-[20px] w-[208px] items-center justify-between rounded-[5px] pl-[8px] pr-[2px] text-[13px] ${dim ? "bg-[#f0f0f0] tracking-[0.100px] text-[#b3b3b3] shadow-[0_0_1.500px_rgba(0,0,0,0.3)]" : "bg-white text-[#111] shadow-[0_0.5px_1.500px_rgba(0,0,0,0.45)]"}`}>
      <span>{text}</span>
      <UpDown dim={dim} />
    </div>
  );
}

function Spin({ value }) {
  return (
    <div className="flex items-center">
      <span className="flex h-[19px] w-[92px] items-center border border-[#d0d0d0] border-b-[#a5a5a5] bg-white pl-[1px] pt-[1px] text-[13px] tracking-[0.150px] text-black">{value}</span>
      <span className="ml-[2px] flex h-[20px] w-[13px] flex-col rounded-[4px] bg-white shadow-[0_0_1.500px_rgba(0,0,0,0.45)]">
        <svg viewBox="0 0 13 20" className="h-[20px] w-[13px]" fill="none"><path d="M0 10h13" stroke="#ddd" /><path d="M3.500 6.500l3-3 3 3M3.500 13.500l3 3 3-3" stroke="#222" strokeWidth="1.500" /></svg>
      </span>
    </div>
  );
}

function RightDock() {
  return (
    <div className="flex w-[391px] shrink-0 flex-col border-l border-[#9b9b9b] bg-[#ececec]">
      <TabStrip left="mr-[48px] w-[67px] flex-1" right="ml-[7px] w-[111px] shrink-0" tabs={[["Items", "w-[55px] pr-[4px]", true], ["Undo History", "w-[96px] pl-[8px]", false]]} />
      <DockHeader title="Items" pad="pr-[2px]" />
      <div className="flex h-[186px] shrink-0 flex-col border-b border-l border-r border-t border-[#8f8f8f] bg-white">
        <div className="flex h-[17px] shrink-0 items-center bg-[#ececec] pl-[4px] text-[13px] text-[#222]">
          <svg viewBox="0 0 18 12" className="h-[12px] w-[17px]" fill="none"><path d="M1 6.500c4-6 12-6 16 0-4 4.500-12 4.500-16 0z" fill="#f5f5f5" stroke="#999" /><circle cx="9" cy="6" r="3.300" fill="#777" /><circle cx="9" cy="6" r="1.500" fill="#111" /><path d="M2 3.500c4-3.500 10-3.500 14 0" stroke="#aaa" /></svg>
          <span className="ml-[6px] h-[13px] w-px bg-[#bdbdbd]" />
          <svg viewBox="0 0 14 16" className="ml-[6px] h-[15px] w-[13px]" fill="none"><path d="M3.500 8V5c0-5 7-5 7 0v3" stroke="#888" strokeWidth="1.600" /><rect x="1" y="7.500" width="12" height="8" rx="1.500" fill="#555" /></svg>
          <span className="ml-[8px] h-[13px] w-px bg-[#bdbdbd]" />
          <span className="ml-[4px]">Item</span>
          <span className="ml-auto h-[13px] w-px bg-[#aaa]" />
        </div>
        <ItemRow on text="<Legend>" bg="bg-white" icon={<svg viewBox="0 0 14 14" className="h-[14px] w-[14px]" fill="none"><g stroke="#333"><rect x=".8" y=".8" width="2.500" height="2.500" /><rect x=".8" y="5.800" width="2.500" height="2.500" /><rect x=".8" y="10.700" width="2.500" height="2.500" /></g><path d="M5 2h5.500M5 7h9M5 12h3M10 12h3" stroke="#999" strokeWidth="1.500" /></svg>} />
        <ItemRow on text="Map 1" bg="bg-[#dcdcdc]" icon={<svg viewBox="0 0 14 14" className="h-[14px] w-[14px]" fill="none"><path d="M2.500 1.500h11v11h-11z" fill="#dedede" stroke="#999" /><path d="M.7 2c0-1.500 2.300-1.500 2.300 0v9c0 2-2.300 2-2.300 0z" fill="#eee" stroke="#999" strokeWidth=".8" /></svg>} />
      </div>
      <div className="pt-[1px]">
        <TabStrip left="mr-[6px] flex-1" right="ml-[8px] w-[67px] shrink-0" tabs={[["Layout", "w-[60px] pr-[6px]", false], ["Item Properties", "w-[118px] pr-[1px]", true], ["Guides", "w-[59px] pl-[8px]", false]]} />
      </div>
      <DockHeader title="Item Properties" pad="pr-[2px]" />
      <div className="flex flex-1 flex-col pl-[12px] text-[13px] text-[#111]">
        <div className="flex h-[18px] items-end pl-[9px] text-[13px] font-bold leading-[14px] tracking-[0.100px] text-black">Page Size</div>
        <div className="ml-[3px] flex h-[180px] w-[360px] flex-col rounded-[5px] border border-[#d8d8d8] bg-[#e6e6e6] pl-[11px]">
          <div className="mt-[17px] flex h-[22px] items-center"><span className="w-[84px] pt-[4px]">Size</span><Select text="Custom" /><span className="ml-[17px]"><Override /></span></div>
          <div className="mt-[20px] flex h-[22px] items-center"><span className="w-[84px] pt-[4px]">Orientation</span><Select text="Landscape" dim /><span className="ml-[17px]"><Override /></span></div>
          <div className="mt-[20px] flex">
            <div className="flex flex-col">
              <div className="flex h-[22px] items-center"><span className="w-[79px] pt-[2px]">Width</span><Spin value="298.000" /><span className="ml-[13px] pt-[1px]"><Override /></span></div>
              <div className="mt-[14px] flex h-[22px] items-center"><span className="w-[79px] pt-[5px]">Height</span><Spin value="210.000" /><span className="ml-[13px] pt-[1px]"><Override /></span></div>
            </div>
            <div className="ml-[12px] mt-[1px] flex h-[58px] w-[24px] items-center justify-center border border-[#a8a8a8] bg-gradient-to-b from-[#e2e2e2] to-[#f3f3f3]">
              <svg viewBox="0 0 22 56" className="h-[56px] w-[22px]" fill="none"><path d="M4 6h7.500v9M4 50h7.500v-8" stroke="#888" strokeWidth="1.500" /><path d="M8 25c0-5 8-5 8 0v4" stroke="#999" strokeWidth="1.500" /><rect x="5" y="28" width="12" height="8" rx="1" fill="#555" /></svg>
            </div>
            <div className="ml-[13px] mt-[19px] flex h-[20px] w-[53px] items-center justify-between rounded-[5px] bg-white pl-[8px] pr-[2px] shadow-[0_0.5px_1.500px_rgba(0,0,0,0.45)]"><span className="pt-[1px]">mm</span><UpDown /></div>
          </div>
        </div>
        <div className="mt-[24px] flex h-[20px] items-center pl-[2px]"><Check /><span className="ml-[4px] w-[172px] whitespace-nowrap pt-[1px] tracking-[-0.120px]">Exclude page from exports</span><Override /></div>
        <div className="mt-[16px] flex h-[24px] items-center"><span className="w-[83px] pt-[1px] tracking-[-0.150px]">Background</span>
          <div className="flex h-[22px] w-[276px] items-center border border-[#a8a8a8] bg-gradient-to-b from-[#e4e4e4] to-[#f4f4f4] px-[4px]"><div className="h-[10px] w-full bg-white" /></div>
          <svg viewBox="0 0 6 6" className="mt-[12px] h-[6px] w-[6px]" fill="none"><path d="M.5 1.500l2.500 2.500 2.500-2.500" stroke="#222" strokeWidth="1.500" /></svg>
        </div>
      </div>
    </div>
  );
}

function StatusBar() {
  return (
    <div className="flex h-[44px] shrink-0 items-center border-t border-[#777] bg-gradient-to-b from-[#e8e8e8] to-[#b2b2b2] text-[13px] text-black">
      <span className="ml-[789px] w-[106px] whitespace-nowrap">x: 144.57 mm</span>
      <span className="w-[106px] whitespace-nowrap tracking-[0.080px]">y: 128.625 mm</span>
      <span className="w-[108px] whitespace-nowrap">page: 1</span>
      <div className="flex h-[20px] w-[138px] items-center justify-between rounded-[5px] bg-white pl-[2px] pr-[2px] shadow-[0_0.5px_1.500px_rgba(0,0,0,0.5)]">
        <span>66.4%</span>
        <span className="flex h-[16px] w-[16px] items-center justify-center rounded-[4px] bg-gradient-to-b from-[#8c8c8c] to-[#747474]">
          <svg viewBox="0 0 10 10" className="h-[10px] w-[10px]" fill="none"><path d="M2 3.500l3 3 3-3" stroke="#fff" strokeWidth="1.600" /></svg>
        </span>
      </div>
      <div className="mb-[5px] ml-[10px] flex items-center">
        <span className="h-[4px] w-[4px] rounded-l-full bg-[#8e8e8e]" />
        <span className="h-[20px] w-[20px] rounded-full bg-white shadow-[0_0.5px_1.500px_rgba(0,0,0,0.4)]" />
        <span className="h-[4px] w-[72px] rounded-r-full bg-[#bfbfbf]" />
      </div>
    </div>
  );
}

export default function App() {
  return (
    <div className="h-[982px] w-[1480px] overflow-hidden bg-white px-[55px] pt-[37px] font-['Inter','Liberation_Sans',sans-serif]">
      <div className="flex h-[872px] w-[1370px] flex-col overflow-hidden rounded-[10px] border border-[#b5b2b1] bg-[#ececec] shadow-[0_20px_36px_rgba(0,0,0,0.42),0_0_14px_rgba(0,0,0,0.12)]">
        <div className="flex h-[29px] shrink-0 items-center border-b border-[#d8d4d2] bg-[#fcf3f0]">
          <div className="flex w-[120px] gap-[8px] pl-[8px]">
            {[0, 1, 2].map((i) => <span key={i} className="h-[12px] w-[12px] rounded-full border border-[#7d7573] bg-[#948b89]" />)}
          </div>
          <span className="flex-1 pr-[120px] text-center text-[13px] font-bold tracking-[0.080px] text-[#4d4745]">crime-map-borough-lsoa</span>
        </div>
        <ToolbarTop />
        <ToolbarSecond />
        <div className="flex min-h-0 flex-1">
          <SideToolbar />
          <div className="flex w-[941px] flex-col">
            <TopRuler />
            <div className="flex min-h-0 flex-1 overflow-hidden">
              <LeftRuler />
              <div className="flex-1 bg-[#d7d7d7] pl-[42px] pt-[58px]">
                <div className="relative h-[593px] w-[842px] bg-white shadow-[7.5px_8px_0_#969696]">
                  <LondonMap />
                  <Legend />
                </div>
              </div>
            </div>
          </div>
          <RightDock />
        </div>
        <StatusBar />
      </div>
    </div>
  );
}
